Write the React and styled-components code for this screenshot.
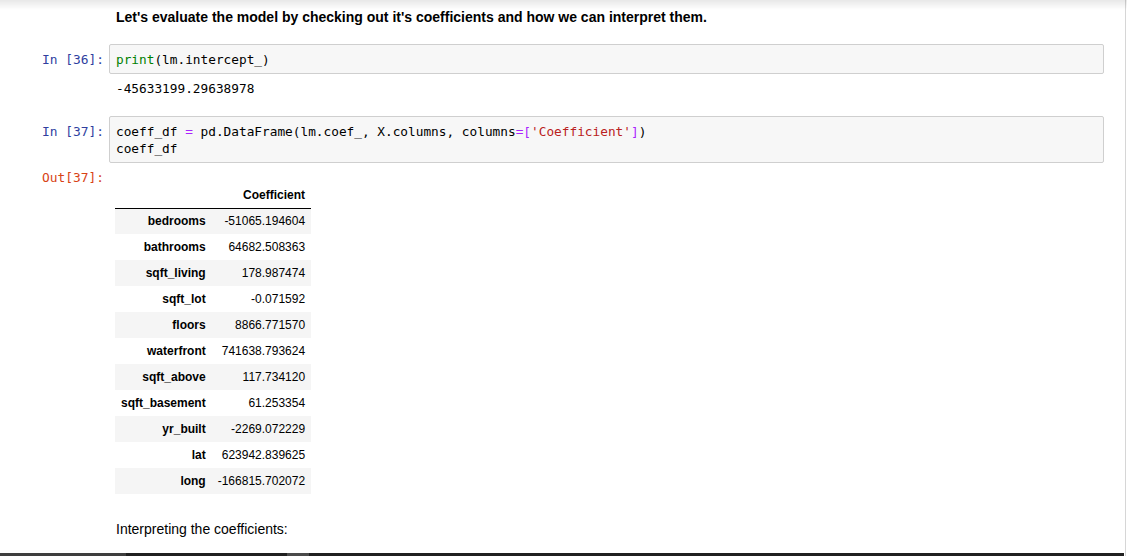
import React from "react";
import styled, { createGlobalStyle } from "styled-components";

const GlobalStyle = createGlobalStyle`
  html, body {
    margin: 0;
    padding: 0;
    background: #fff;
  }
  body {
    font-family: "Liberation Sans", Arial, sans-serif;
    color: #000;
    overflow: hidden;
  }
`;

const TopShadow = styled.div`
  position: fixed;
  top: 0;
  left: 0;
  right: 0;
  height: 10px;
  background: linear-gradient(rgba(0, 0, 0, 0.09), rgba(0, 0, 0, 0));
  pointer-events: none;
`;

const TaskStrip = styled.div`
  position: fixed;
  left: 0;
  bottom: 0;
  width: 1124px;
  height: 3px;
  display: flex;
`;

const StripPart = styled.div`
  width: ${(p) => (p.$w ? `${p.$w}px` : "auto")};
  flex: ${(p) => (p.$w ? "none" : "1")};
  background: ${(p) => p.$c};
`;

const Notebook = styled.div`
  width: 1126px;
  height: 556px;
  box-sizing: border-box;
  border-right: 1px solid #d6d6d6;
  padding: 7px 21px 0 0;
`;

const Row = styled.div`
  display: flex;
  margin-top: ${(p) => p.$mt || 0}px;
`;

const Prompt = styled.div`
  width: 109px;
  flex: none;
  box-sizing: border-box;
  padding: ${(p) => p.$pt || 0}px 5px 0 0;
  text-align: right;
  font-family: "DejaVu Sans Mono", monospace;
  font-size: 12.9px;
  line-height: 17px;
  color: ${(p) => (p.$out ? "#D84315" : "#303F9F")};
  ${(p) => (p.$boxed ? "padding-top: 7px;" : "")}
`;

const Area = styled.div`
  flex: 1;
  min-width: 0;
`;

const MarkdownText = styled.div`
  padding-left: 7px;
  font-size: 14px;
  font-weight: ${(p) => (p.$bold ? 700 : 400)};
  line-height: 20px;
  color: #000;
`;

const InputBox = styled.div`
  background: #f7f7f7;
  border: 1px solid #cfcfcf;
  border-radius: 2px;
  padding: 6px 6px 5px;
`;

const CodeLine = styled.div`
  font-family: "DejaVu Sans Mono", monospace;
  font-size: 12.77px;
  line-height: 17px;
  color: #000;
  white-space: pre;
`;

const Tok = styled.span`
  color: ${(p) =>
    p.$k === "builtin"
      ? "#008000"
      : p.$k === "op"
      ? "#AA22FF"
      : p.$k === "str"
      ? "#BA2121"
      : "#000"};
`;

const OutputText = styled.div`
  padding: 6px 0 0 7px;
  font-family: "DejaVu Sans Mono", monospace;
  font-size: 12.77px;
  line-height: 17px;
  color: #000;
  white-space: pre;
`;

const TableWrap = styled.div`
  padding: 19px 0 0 6px;
`;

const Table = styled.table`
  border-collapse: collapse;
  border-spacing: 0;
  font-family: "Liberation Sans", Arial, sans-serif;
  font-size: 12px;
  color: #000;

  th,
  td {
    height: 26px;
    padding: 0 6px;
    text-align: right;
    vertical-align: middle;
    white-space: nowrap;
    box-sizing: border-box;
  }

  thead th {
    font-weight: 700;
    border-bottom: 1px solid #000;
  }

  tbody th {
    font-weight: 700;
  }

  tbody tr:nth-child(odd) {
    background: #f5f5f5;
  }
`;

const coefficients = [
  ["bedrooms", "-51065.194604"],
  ["bathrooms", "64682.508363"],
  ["sqft_living", "178.987474"],
  ["sqft_lot", "-0.071592"],
  ["floors", "8866.771570"],
  ["waterfront", "741638.793624"],
  ["sqft_above", "117.734120"],
  ["sqft_basement", "61.253354"],
  ["yr_built", "-2269.072229"],
  ["lat", "623942.839625"],
  ["long", "-166815.702072"],
];

const App = () => {
  return (
    <>
      <GlobalStyle />
      <Notebook>
        <Row>
          <Prompt />
          <Area>
            <MarkdownText $bold>
              Let's evaluate the model by checking out it's coefficients and how we can interpret them.
            </MarkdownText>
          </Area>
        </Row>

        <Row $mt={17}>
          <Prompt $boxed>In [36]:</Prompt>
          <Area>
            <InputBox>
              <CodeLine>
                <Tok $k="builtin">print</Tok>(lm.intercept_)
              </CodeLine>
            </InputBox>
          </Area>
        </Row>
        <Row>
          <Prompt />
          <Area>
            <OutputText>-45633199.29638978</OutputText>
          </Area>
        </Row>

        <Row $mt={19}>
          <Prompt $boxed>In [37]:</Prompt>
          <Area>
            <InputBox>
              <CodeLine>
                coeff_df <Tok $k="op">=</Tok> pd.DataFrame(lm.coef_, X.columns, columns
                <Tok $k="op">=[</Tok>
                <Tok $k="str">'Coefficient'</Tok>
                <Tok $k="op">]</Tok>)
              </CodeLine>
              <CodeLine>coeff_df</CodeLine>
            </InputBox>
          </Area>
        </Row>
        <Row>
          <Prompt $out $pt={6}>Out[37]:</Prompt>
          <Area>
            <TableWrap>
              <Table>
                <thead>
                  <tr>
                    <th></th>
                    <th>Coefficient</th>
                  </tr>
                </thead>
                <tbody>
                  {coefficients.map(([name, value]) => (
                    <tr key={name}>
                      <th>{name}</th>
                      <td>{value}</td>
                    </tr>
                  ))}
                </tbody>
              </Table>
            </TableWrap>
          </Area>
        </Row>

        <Row $mt={25}>
          <Prompt />
          <Area>
            <MarkdownText>Interpreting the coefficients:</MarkdownText>
          </Area>
        </Row>
      </Notebook>
      <TopShadow />
      <TaskStrip>
        <StripPart $w={126} $c="#3e3e3e" />
        <StripPart $w={161} $c="#202020" />
        <StripPart $w={22} $c="#4a4a4a" />
        <StripPart $c="#202020" />
      </TaskStrip>
    </>
  );
};

export default App;
